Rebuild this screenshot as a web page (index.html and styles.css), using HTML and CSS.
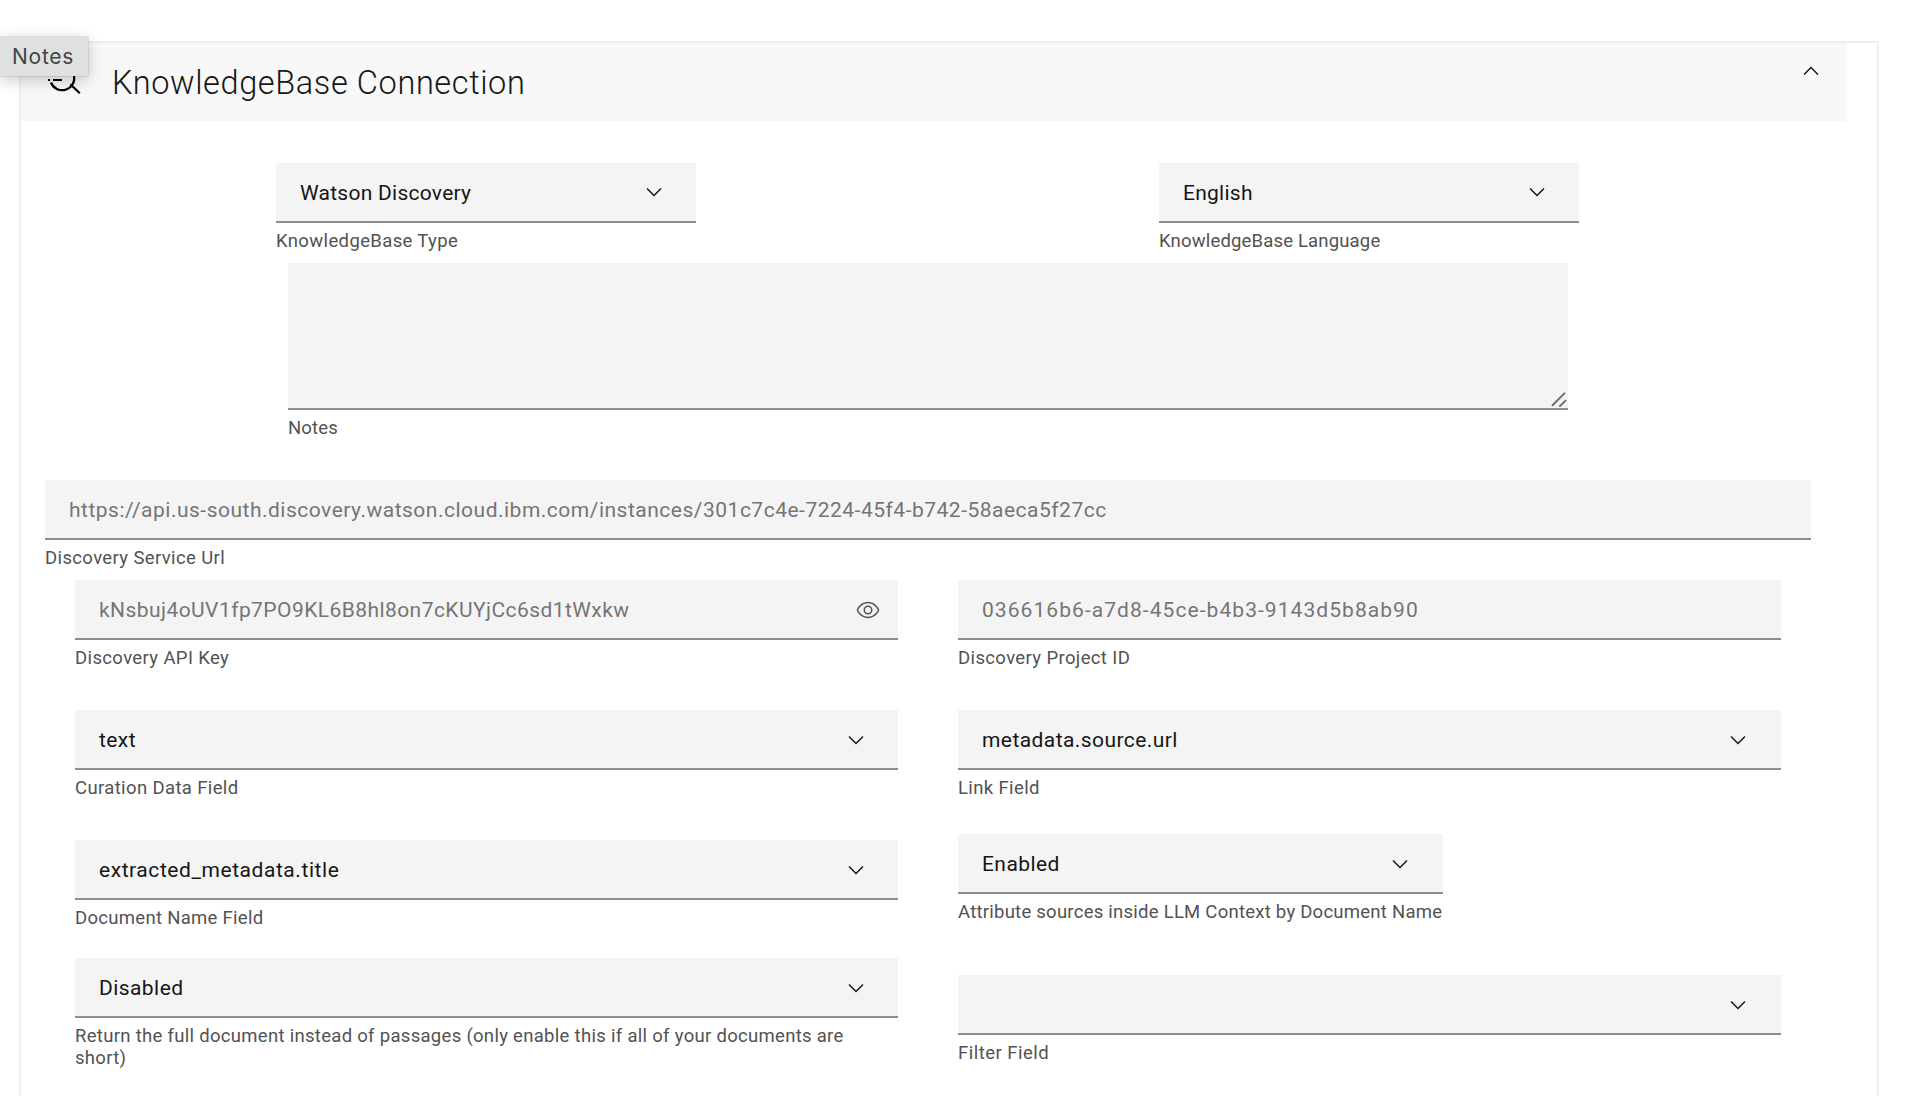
FILE: index.html
```
<!DOCTYPE html>
<html lang="en">
<head>
<meta charset="utf-8">
<title>KnowledgeBase Connection</title>
<link rel="stylesheet" href="styles.css">
</head>
<body>
<svg width="0" height="0" class="sprite" aria-hidden="true">
  <symbol id="chevron" viewBox="0 0 16 16"><path d="M8 11 3 6 3.7 5.3 8 9.6 12.3 5.3 13 6z"/></symbol>
</svg>
<main class="card">
  <header class="card-header">
    <svg class="search-icon" viewBox="0 0 32 32" fill="none" stroke="#000" stroke-width="2.2">
      <path d="M3 20.5A12 11.8 0 0 0 26 14M22.3 22.3 31.8 31.2"/>
      <path d="M0 18h2M5 18H14" stroke-width="2"/>
    </svg>
    <h1 class="card-title">KnowledgeBase Connection</h1>
    <svg class="chevron collapse"><use href="#chevron"/></svg>
  </header>

  <div class="card-body">
    <div class="type-row">
      <div class="field">
        <div class="control"><span class="value value-type">Watson Discovery</span><svg class="chevron"><use href="#chevron"/></svg></div>
        <div class="caption">KnowledgeBase Type</div>
      </div>
      <div class="field">
        <div class="control"><span class="value value-type">English</span><svg class="chevron"><use href="#chevron"/></svg></div>
        <div class="caption caption-tight">KnowledgeBase Language</div>
      </div>
    </div>

    <div class="field notes-field">
      <div class="control textarea">
        <svg class="grip" viewBox="0 0 16 16" fill="none" stroke="#6f6f6f" stroke-width="2" stroke-linecap="round"><path d="M1.6 14.2 13.4 2.4M9 15 14.6 9.6"/></svg>
      </div>
      <div class="caption caption-tight">Notes</div>
    </div>

    <div class="field url-field">
      <div class="control"><span class="value placeholder value-url">https://api.us-south.discovery.watson.cloud.ibm.com/instances/301c7c4e-7224-45f4-b742-58aeca5f27cc</span></div>
      <div class="caption">Discovery Service Url</div>
    </div>

    <div class="columns">
      <div class="column">
        <div class="field">
          <div class="control with-button"><span class="value placeholder">kNsbuj4oUV1fp7PO9KL6B8hl8on7cKUYjCc6sd1tWxkw</span>
            <svg class="eye" viewBox="0 0 16 16"><path fill-rule="evenodd" d="M15.5 7.8C14.3 4.7 11.3 2.6 8 2.5 4.7 2.6 1.7 4.7.5 7.8a.3.3 0 0 0 0 .4C1.7 11.3 4.7 13.4 8 13.5c3.3-.1 6.3-2.2 7.5-5.3a.3.3 0 0 0 0-.4zM8 12.5C5.3 12.5 2.6 10.6 1.5 8 2.6 5.4 5.3 3.5 8 3.5S13.4 5.4 14.5 8C13.4 10.6 10.7 12.5 8 12.5z"/><path fill-rule="evenodd" d="M8 5a3 3 0 1 0 0 6 3 3 0 0 0 0-6zm0 5a2 2 0 1 1 0-4 2 2 0 0 1 0 4z"/></svg>
          </div>
          <div class="caption">Discovery API Key</div>
        </div>
        <div class="field curation-field">
          <div class="control"><span class="value">text</span><svg class="chevron"><use href="#chevron"/></svg></div>
          <div class="caption">Curation Data Field</div>
        </div>
        <div class="field name-field">
          <div class="control"><span class="value value-wide">extracted_metadata.title</span><svg class="chevron"><use href="#chevron"/></svg></div>
          <div class="caption caption-long">Document Name Field</div>
        </div>
        <div class="field full-doc-field">
          <div class="control"><span class="value">Disabled</span><svg class="chevron"><use href="#chevron"/></svg></div>
          <div class="caption caption-long">Return the full document instead of passages (only enable this if all of your documents are short)</div>
        </div>
      </div>
      <div class="column column-right">
        <div class="field">
          <div class="control"><span class="value placeholder value-id">036616b6-a7d8-45ce-b4b3-9143d5b8ab90</span></div>
          <div class="caption">Discovery Project ID</div>
        </div>
        <div class="field link-field">
          <div class="control"><span class="value">metadata.source.url</span><svg class="chevron"><use href="#chevron"/></svg></div>
          <div class="caption">Link Field</div>
        </div>
        <div class="field attribute-field">
          <div class="control"><span class="value">Enabled</span><svg class="chevron"><use href="#chevron"/></svg></div>
          <div class="caption caption-attribute">Attribute sources inside LLM Context by Document Name</div>
        </div>
        <div class="field filter-field">
          <div class="control"><span class="value"></span><svg class="chevron"><use href="#chevron"/></svg></div>
          <div class="caption caption-wide">Filter Field</div>
        </div>
      </div>
    </div>
  </div>
</main>
<div class="tooltip" role="tooltip">Notes</div>
</body>
</html>
```
FILE: styles.css
```
* { box-sizing: border-box; }

body {
  display: flow-root;
  margin: 0;
  height: 100vh;
  background: #fff;
  color: #161616;
  font-family: Roboto, "Noto Sans", sans-serif;
}

.sprite { display: none; }

.card {
  width: 1860px;
  height: calc(100vh - 41px);
  margin: 41px 0 0 19px;
  border: 2px solid #eee;
  border-bottom: 0;
}

.card-header {
  display: flex;
  align-items: flex-start;
  width: 1826px;
  height: 78px;
  padding: 16px 24px 0 27px;
  background: #f8f8f8;
}

.search-icon {
  width: 32px;
  height: 32px;
  margin-top: 3px;
  overflow: visible;
}

.card-title {
  flex: 1;
  margin: 0 0 0 32px;
  font-size: 32.5px;
  font-weight: 300;
  line-height: 48px;
  letter-spacing: 0.61px;
}

.chevron {
  flex: none;
  width: 24px;
  height: 24px;
  fill: #161616;
}

.collapse { transform: rotate(180deg); }

.card-body {
  width: 1790px;
  padding: 42px 0 0 24px;
}

.type-row {
  display: grid;
  grid-template-columns: 420px 420px;
  column-gap: 463px;
  margin-left: 231px;
}

.control {
  display: flex;
  align-items: center;
  justify-content: space-between;
  height: 60px;
  padding: 0 30px 0 24px;
  border-bottom: 2px solid #8d8d8d;
  background: #f4f4f4;
}

.columns .control { padding-top: 1px; }
.column-right .control { padding-right: 31px; }
.columns .with-button { padding-right: 18px; }

.value {
  padding-top: 1px;
  font-size: 21px;
  line-height: 28px;
  letter-spacing: 0.43px;
  white-space: nowrap;
}

.columns .value { padding-top: 0; }

.placeholder { color: #757575; }
.value-type { letter-spacing: 0.26px; }
.value-url { letter-spacing: 0.5px; }
.value-wide { letter-spacing: 0.56px; }
.value-id { letter-spacing: 1.06px; }

.caption {
  padding-top: 7px;
  color: #525252;
  font-size: 18.5px;
  line-height: 22px;
  letter-spacing: 0.37px;
}

.caption-tight { letter-spacing: 0.17px; }
.caption-long { letter-spacing: 0.3px; }
.caption-wide { letter-spacing: 0.48px; }
.caption-attribute { letter-spacing: 0.25px; white-space: nowrap; }

.notes-field {
  width: 1280px;
  margin: 11px 0 0 243px;
}

.textarea {
  align-items: flex-end;
  justify-content: flex-end;
  height: 147px;
  padding: 0 1px 1px 0;
}

.grip {
  width: 16px;
  height: 16px;
}

.url-field { margin-top: 41px; }

.columns {
  display: grid;
  grid-template-columns: 823px 823px;
  column-gap: 60px;
  margin: 11px 0 0 30px;
}

.eye {
  width: 24px;
  height: 24px;
  fill: #525252;
}

.curation-field,
.link-field,
.name-field { margin-top: 41px; }
.full-doc-field { margin-top: 29px; }
.attribute-field { width: 485px; margin-top: 35px; }
.filter-field { margin-top: 52px; }

.tooltip {
  position: absolute;
  top: 37px;
  left: 0;
  width: 88px;
  height: 39px;
  padding-left: 12px;
  background: #dfe0e2;
  box-shadow: 0 0 0 1px rgba(0, 0, 0, 0.08), 0 4px 16px rgba(0, 0, 0, 0.22);
  color: #444;
  font-family: Inter, "Liberation Sans", sans-serif;
  font-size: 21px;
  font-weight: 400;
  line-height: 39px;
  letter-spacing: 0.75px;
}
```
